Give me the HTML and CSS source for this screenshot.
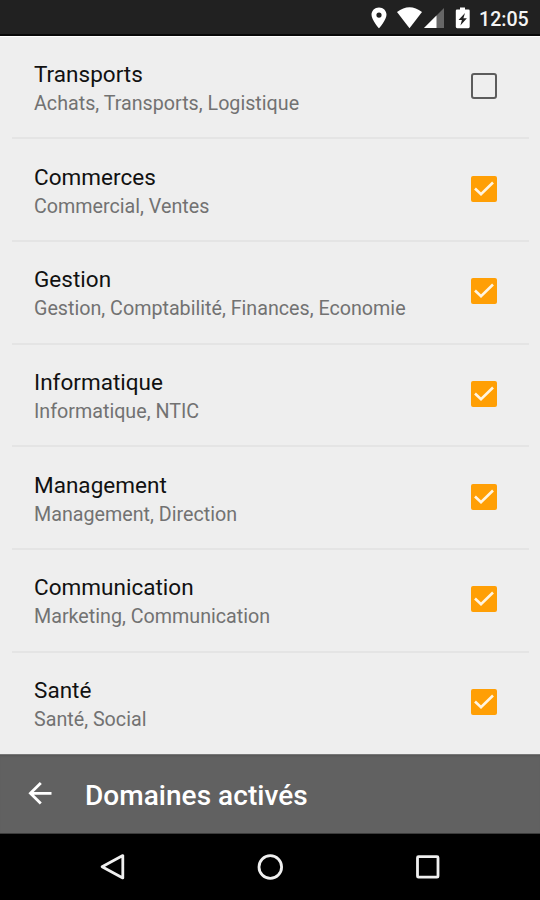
FILE: index.html
```html
<!DOCTYPE html>
<html lang="fr">
<head>
<meta charset="utf-8">
<title>Domaines activés</title>
<link rel="stylesheet" href="styles.css">
</head>
<body>
<div class="screen">
  <header class="status">
    <svg class="status-icons" width="112" height="35" viewBox="0 0 112 35">
      <path fill="#fff" fill-rule="evenodd" d="M11 7.500c-4.300 0-7.500 3.200-7.500 7.300 0 5.300 7.500 13.500 7.500 13.500s7.500-8.200 7.500-13.500c0-4.100-3.200-7.300-7.500-7.300zm0 5a2.600 2.600 0 1 1 0 5.200 2.600 2.600 0 0 1 0-5.200z"/>
      <path fill="#fff" d="M29 12q12.500-9.600 25 0L41.500 28.300z"/>
      <path fill="#666" d="M76 8v20H56z"/>
      <path fill="#fff" d="M68.500 15.500V28H56z"/>
      <path fill="#fff" fill-rule="evenodd" d="M92 7.500h5v2h3.500q1.200 0 1.200 1.200v16.100q0 1.400-1.400 1.400H89.200q-1.400 0-1.400-1.400V10.700q0-1.200 1.200-1.200h3zM97 13l-6.500 7h3.400l-1.500 5.500 6.500-7.200h-3.500z"/>
    </svg>
    <span class="clock">12:05</span>
  </header>
  <main class="list">
    <div class="row"><div class="text"><div class="title">Transports</div><div class="sub">Achats, Transports, Logistique</div></div><span class="box"></span></div>
    <div class="row"><div class="text"><div class="title">Commerces</div><div class="sub">Commercial, Ventes</div></div><span class="box on"><svg viewBox="0 0 26 26"><path d="M4 12.500l6 5.800L22 6.500"/></svg></span></div>
    <div class="row"><div class="text"><div class="title">Gestion</div><div class="sub">Gestion, Comptabilité, Finances, Economie</div></div><span class="box on"><svg viewBox="0 0 26 26"><path d="M4 12.500l6 5.800L22 6.500"/></svg></span></div>
    <div class="row"><div class="text"><div class="title">Informatique</div><div class="sub">Informatique, NTIC</div></div><span class="box on"><svg viewBox="0 0 26 26"><path d="M4 12.500l6 5.800L22 6.500"/></svg></span></div>
    <div class="row"><div class="text"><div class="title">Management</div><div class="sub">Management, Direction</div></div><span class="box on"><svg viewBox="0 0 26 26"><path d="M4 12.500l6 5.800L22 6.500"/></svg></span></div>
    <div class="row"><div class="text"><div class="title">Communication</div><div class="sub">Marketing, Communication</div></div><span class="box on"><svg viewBox="0 0 26 26"><path d="M4 12.500l6 5.800L22 6.500"/></svg></span></div>
    <div class="row"><div class="text"><div class="title">Santé</div><div class="sub">Santé, Social</div></div><span class="box on"><svg viewBox="0 0 26 26"><path d="M4 12.500l6 5.800L22 6.500"/></svg></span></div>
  </main>
  <div class="toolbar">
    <svg class="back" width="26" height="26" viewBox="0 0 26 26"><path d="M24.500 13.300H3.500M13.800 3L3.400 13.300 13.800 23.600"/></svg>
    <h1 class="heading">Domaines activés</h1>
  </div>
  <nav class="nav">
    <svg width="28" height="28" viewBox="0 0 28 28"><path d="M23.800 2.600v22.300L3.100 13.700z"/></svg>
    <svg width="28" height="28" viewBox="0 0 28 28"><circle cx="14.300" cy="14" r="11.300"/></svg>
    <svg width="28" height="28" viewBox="0 0 28 28"><rect x="4.500" y="3.700" width="20.500" height="20.500" rx="1"/></svg>
  </nav>
</div>
</body>
</html>
```
FILE: styles.css
```css
* { box-sizing: border-box; }
body { margin: 0; font-family: Roboto, "Liberation Sans", sans-serif; background: #000; }
.screen { width: 540px; height: 900px; display: flex; flex-direction: column; }
.status { height: 36px; background: #212121; border-bottom: 2px solid #080808; display: flex; align-items: flex-start; justify-content: flex-end; padding-right: 12px; }
.status-icons { display: block; margin-right: -1px; }
.clock { width: 49px; font-size: 19.600px; line-height: 39px; font-weight: 500; color: #f4f4f4; white-space: nowrap; }
.list { height: 718px; background: #eee; border-top: 1px solid #fff; padding: 0 11px 0 12px; display: flex; flex-direction: column; }
.row { height: 102.650px; flex: none; display: flex; justify-content: space-between; padding: 22.400px 32px 0 22px; border-bottom: 2px solid #e4e4e4; }
.row:first-child { height: 102.300px; }
.row:last-child { height: 100px; border-bottom: 0; }
.title { font-size: 22.500px; line-height: 30px; color: #111; letter-spacing: .02px; white-space: nowrap; }
.sub { font-size: 19.700px; line-height: 29px; color: #727272; white-space: nowrap; }
.box { width: 26px; height: 26px; margin-top: 14px; border: 2px solid #5c5c5c; border-radius: 3px; flex: none; }
.box.on { border: 0; background: #ff9f05; border-radius: 2px; }
.box svg { display: block; width: 26px; height: 26px; fill: none; stroke: #fff5e2; stroke-width: 2.600; }
.toolbar { height: 80px; background: #616161; border-top: 1px solid #777; border-bottom: 1px solid #3c3c3c; box-shadow: inset 0 2px 2px -1px #565656; display: flex; align-items: center; padding-left: 27px; }
.back { fill: none; stroke: #fff; stroke-width: 2.800; flex: none; margin-top: -2px; }
.heading { margin: 3px 0 0 32px; font-size: 28px; line-height: 36px; font-weight: 500; color: #fff; letter-spacing: .04px; white-space: nowrap; }
.nav { height: 66px; background: #000; display: flex; justify-content: center; gap: 129px; align-items: center; }
.nav svg { fill: none; stroke: #f0f0f0; stroke-width: 2.800; stroke-linejoin: round; }
```
